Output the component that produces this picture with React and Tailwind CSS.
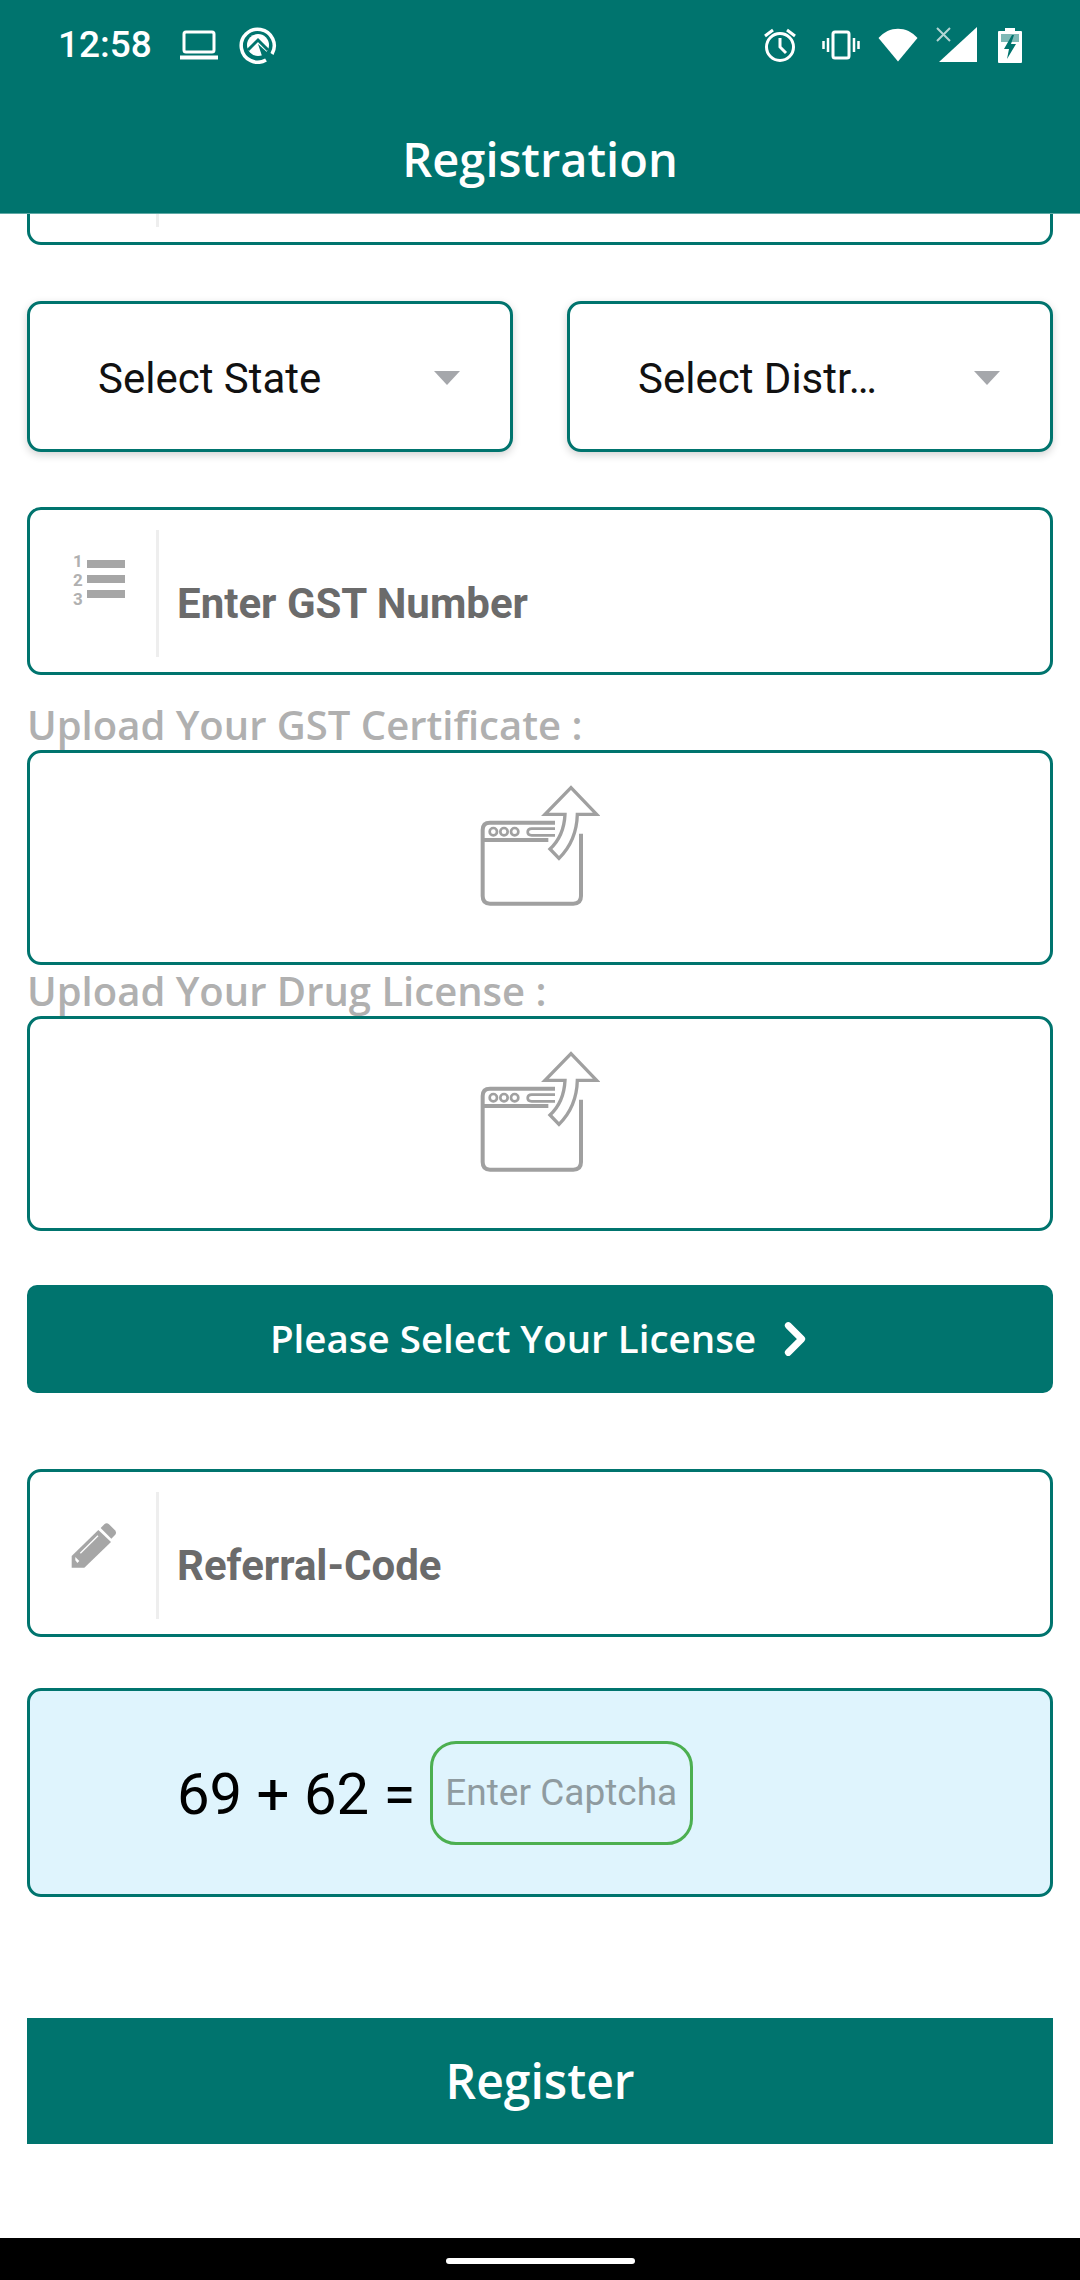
import React from "react";
import { ChevronRight } from "lucide-react";

const teal = "border-[#00746e]";

const StatusIcons = () => (
    <div className="flex items-center">
        {/* alarm */}
        <svg width="34" height="36" viewBox="0 0 34 36" fill="none" stroke="white">
            <circle cx="17" cy="20" r="13.500" strokeWidth="3" />
            <path d="M17 11v9l6 6" strokeWidth="3" />
            <path d="M2 9l8-6M32 9l-8-6" strokeWidth="3" />
        </svg>
        {/* vibrate */}
        <svg width="38" height="30" viewBox="0 0 38 30" className="ml-[25px]" fill="none" stroke="white">
            <rect x="11" y="2" width="16" height="26" rx="2" strokeWidth="3" />
            <path d="M6 8v14M1.500 11v8M32 8v14M36.500 11v8" strokeWidth="2.500" />
        </svg>
        {/* wifi */}
        <svg width="40" height="34" viewBox="0 0 40 34" className="ml-[18px]" fill="white">
            <path d="M0.500 10C11 -2.500 29 -2.500 39.500 10L20 33.500Z" />
        </svg>
        {/* signal + x */}
        <svg width="42" height="36" viewBox="0 0 42 36" className="ml-[18px]" fill="white">
            <path d="M41 0V35H3Z" />
            <path d="M1 1l13 13M14 1L1 14" stroke="white" strokeOpacity="0.7" strokeWidth="2" fill="none" />
        </svg>
        {/* battery */}
        <svg width="24" height="35" viewBox="0 0 24 35" className="ml-[20px]">
            <path d="M7 0h10v3h6a1 1 0 0 1 1 1v30a1 1 0 0 1-1 1H1a1 1 0 0 1-1-1V4a1 1 0 0 1 1-1h6Z" fill="white" />
            <path d="M3 6h18v8H3Z" fill="#00746e" fillOpacity="0.5" />
            <path d="M14 7L6 21h5l-2 10 9-15h-5l3-9Z" fill="#00746e" />
        </svg>
    </div>
);

const ListIcon = () => (
    <svg width="54" height="56" viewBox="0 0 54 56" className="mt-[22px] ml-[41px]">
        <rect x="16" y="8" width="38" height="8" fill="#a6a6a6" />
        <rect x="16" y="23" width="38" height="8" fill="#a6a6a6" />
        <rect x="16" y="38" width="38" height="8" fill="#a6a6a6" />
        <g fontFamily="Roboto, sans-serif" fontSize="17" fontWeight="700" fill="#b0b0b0">
            <text x="2" y="15">1</text>
            <text x="2" y="34">2</text>
            <text x="2" y="53">3</text>
        </g>
    </svg>
);

const PencilIcon = () => (
    <svg width="46" height="46" viewBox="215 183 138 138" className="mt-[30px] ml-[41px]">
        <path d="M217 285L297 207L335 243L255 320H217Z" fill="#a6a6a6" />
        <path d="M304 201L315 190Q322 183 329 190L347 208Q353 215 347 222L336 233Z" fill="#a6a6a6" />
        <path d="M243 277L296 224" stroke="white" strokeWidth="4" />
        <path d="M228 288L240 300L234 306L228 298Z" fill="white" />
    </svg>
);

const UploadIcon = () => (
    <svg width="120" height="124" viewBox="120 70 360 370" fill="none" stroke="#a0a0a0" strokeWidth="12">
        <path d="M345 185H150Q128 185 128 207V405Q128 428 150 428H400Q423 428 423 405V218" />
        <path d="M128 237H325" />
        <circle cx="160" cy="212" r="11" strokeWidth="8" />
        <circle cx="192" cy="212" r="11" strokeWidth="8" />
        <circle cx="224" cy="212" r="11" strokeWidth="8" />
        <path d="M345 203H275Q263 203 263 213Q263 223 275 223H345" strokeWidth="8" />
        <path d="M393 80L470 160H412Q410 240 357 292L330 264Q372 225 375 160H315Z" strokeWidth="10" />
    </svg>
);

const IconField = ({ icon, label }) => (
    <div className={`flex h-[168px] rounded-[14px] border-[3px] ${teal} bg-white`}>
        <div className="h-[127px] w-[129px] mt-[20px] shrink-0 border-r-[3px] border-[#eeeeee]">{icon}</div>
        <div className="pl-[18px] pt-[67px] font-['Roboto',sans-serif] text-[42px] leading-[54px] font-bold text-[#6b6b6b]">
            {label}
        </div>
    </div>
);

const SelectBox = ({ label }) => (
    <button className={`relative flex-1 h-[151px] rounded-[14px] border-[3px] ${teal} bg-white shadow-[0_3px_8px_rgba(0,0,0,0.18)] text-left`}>
        <span className="block pl-[68px] pt-[4px] font-['Roboto',sans-serif] text-[42px] text-[#111111]">{label}</span>
        <span className="absolute right-[50px] top-[67px] h-0 w-0 border-x-[13px] border-t-[14px] border-x-transparent border-t-[#a5a7ab]" />
    </button>
);

const UploadBlock = ({ label, className }) => (
    <div className={className}>
        <div className="h-[51px] font-['Open_Sans','Noto_Sans',sans-serif] text-[40px] leading-[52px] font-semibold text-[#b0b0b0]">{label}</div>
        <div className={`flex h-[215px] items-center justify-center rounded-[14px] border-[3px] ${teal} bg-white pb-[24px]`}>
            <UploadIcon />
        </div>
    </div>
);

export default function App() {
    return (
        <div className="flex h-screen w-full flex-col overflow-hidden bg-white">
            <header className="h-[214px] shrink-0 border-b border-[#5fa9a5] bg-[#00746e] text-white">
                <div className="flex h-[90px] items-center justify-between px-[58px]">
                    <div className="flex items-center">
                        <span className="w-[93px] font-['Roboto',sans-serif] text-[37px] font-medium">12:58</span>
                        <svg width="40" height="30" viewBox="0 0 40 30" className="ml-[28px]" fill="none" stroke="white">
                            <rect x="5" y="2" width="30" height="20" rx="2" strokeWidth="3" />
                            <path d="M1 27.500H39" strokeWidth="4" />
                        </svg>
                        <svg width="38" height="38" viewBox="0 0 38 38" className="ml-[20px]" fill="none" stroke="white">
                            <path d="M27 34A16.500 16.500 0 1 1 33 28" strokeWidth="3.500" />
                            <circle cx="19" cy="19" r="11" fill="white" stroke="none" />
                            <path d="M9 24L19 14L29 24" stroke="#00746e" strokeWidth="3" />
                            <path d="M19 18L30 28L24 33Z" fill="#00746e" stroke="none" />
                        </svg>
                    </div>
                    <StatusIcons />
                </div>
                <h1 className="pt-[44px] text-center font-['Open_Sans','Noto_Sans',sans-serif] text-[47px] leading-[50px] font-semibold">
                    Registration
                </h1>
            </header>

            <main className="flex flex-1 flex-col px-[27px]">
                <div className={`h-[31px] shrink-0 rounded-b-[14px] border-x-[3px] border-b-[3px] ${teal}`}>
                    <div className="h-[13px] w-[129px] border-r-[3px] border-[#eeeeee]" />
                </div>

                <div className="mt-[56px] flex gap-[54px]">
                    <SelectBox label="Select State" />
                    <SelectBox label="Select Distr…" />
                </div>

                <div className="mt-[55px]">
                    <IconField icon={<ListIcon />} label="Enter GST Number" />
                </div>

                <UploadBlock className="mt-[24px]" label="Upload Your GST Certificate :" />
                <UploadBlock label="Upload Your Drug License :" />

                <button className="mt-[54px] flex h-[108px] items-center justify-center rounded-[10px] bg-[#00746e] pl-[12px] font-['Open_Sans','Noto_Sans',sans-serif] text-[38.5px] font-semibold text-white">
                    Please Select Your License
                    <ChevronRight size={54} strokeWidth={3} className="ml-[12px]" />
                </button>

                <div className="mt-[76px]">
                    <IconField icon={<PencilIcon />} label="Referral-Code" />
                </div>

                <div className={`mt-[51px] flex h-[209px] items-center rounded-[14px] border-[3px] ${teal} bg-[#dff4fd] pl-[147px]`}>
                    <span className="pt-[4px] font-['Roboto',sans-serif] text-[58px] text-black">69 + 62 =</span>
                    <div className="ml-[15px] flex h-[104px] w-[263px] items-center rounded-[26px] border-[3px] border-[#4caf50] pl-[12px] font-['Roboto',sans-serif] text-[37px] text-[#8f9ba0]">
                        Enter Captcha
                    </div>
                </div>

                <button className="mt-[121px] h-[126px] bg-[#00746e] font-['Open_Sans','Noto_Sans',sans-serif] text-[48px] font-semibold text-white">
                    Register
                </button>
            </main>

            <div className="flex h-[42px] shrink-0 items-center justify-center bg-black pt-[4px]">
                <div className="h-[6px] w-[189px] rounded-full bg-white" />
            </div>
        </div>
    );
}
